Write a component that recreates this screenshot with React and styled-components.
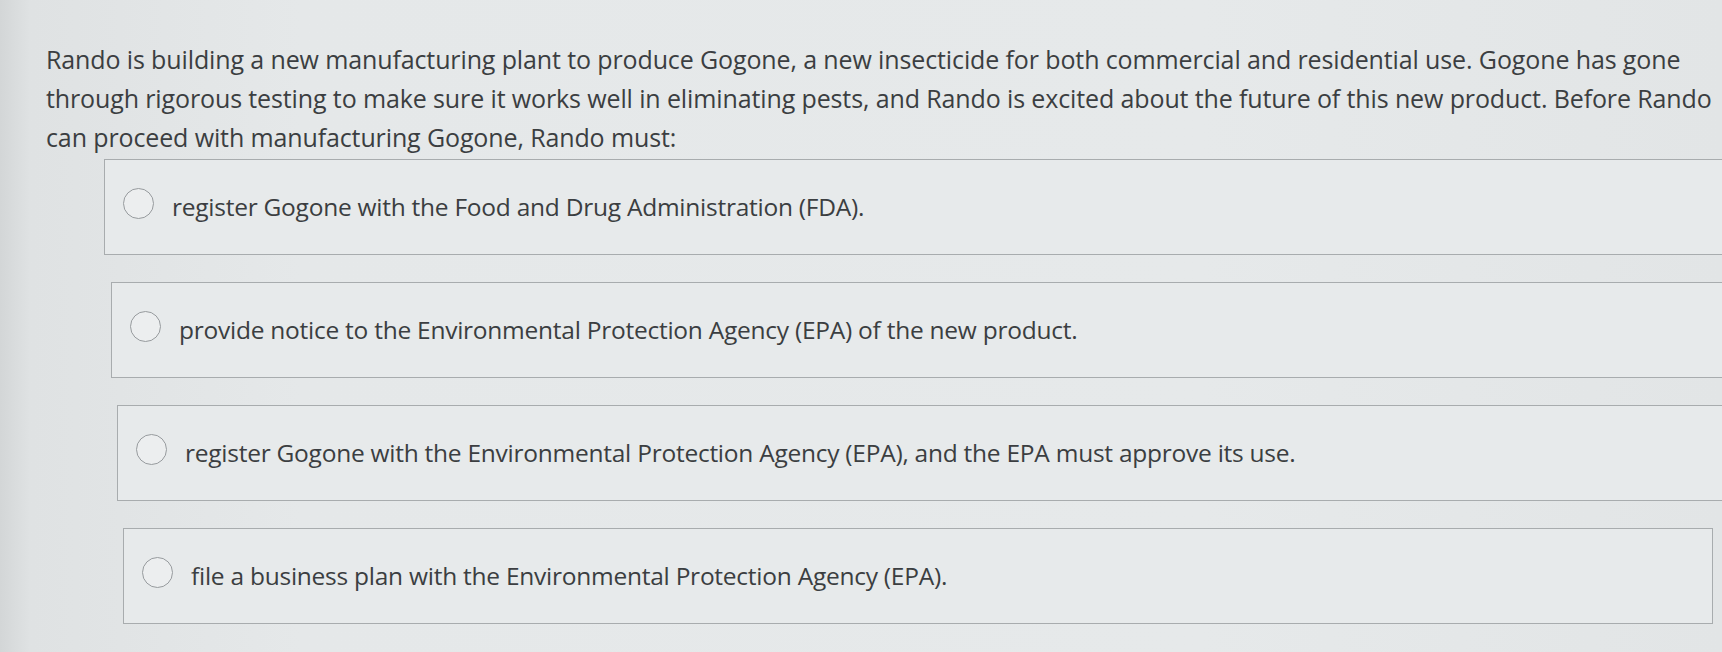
import React from 'react';
import styled, { createGlobalStyle } from 'styled-components';

const Global = createGlobalStyle`
    html, body {
        margin: 0;
        padding: 0;
        overflow: hidden;
    }
    body {
        background: #e3e6e7;
    }
`

const Page = styled.div`
    width: 1722px;
    height: 652px;
    overflow: hidden;
    box-sizing: border-box;
    padding: 40px 0 0 46px;
    background: linear-gradient(90deg, #d3d6d7 0px, #dfe2e3 30px, #e5e8e9 300px, #e6e9ea 1200px, #e2e5e6 1722px);
    font-family: "Open Sans", "Liberation Sans", sans-serif;
    color: #3b3e41;
`

const Question = styled.p`
    margin: 0 0 2px 0;
    font-size: 25px;
    line-height: 39px;
    letter-spacing: -0.12px;
    white-space: nowrap;
`

const Options = styled.div`
    display: flex;
    flex-direction: column;
    gap: 27px;
`

const Option = styled.label`
    display: flex;
    align-items: center;
    gap: 18px;
    height: 96px;
    box-sizing: border-box;
    margin-left: ${p => p.$left}px;
    margin-right: ${p => p.$right}px;
    padding: 0 0 0 18px;
    border: 1.5px solid #a8acae;
    background: #e7eaeb;
    cursor: pointer;
`

const Radio = styled.span`
    flex: none;
    width: 29px;
    height: 29px;
    border-radius: 50%;
    border: 1.5px solid #979b9e;
    background: #eceeef;
    margin-top: -8px;
`

const Text = styled.span`
    font-size: 24.5px;
    line-height: 30px;
    letter-spacing: -0.25px;
    white-space: nowrap;
`

const options = [
    { text: 'register Gogone with the Food and Drug Administration (FDA).', left: 58, right: -20 },
    { text: 'provide notice to the Environmental Protection Agency (EPA) of the new product.', left: 65, right: -14 },
    { text: 'register Gogone with the Environmental Protection Agency (EPA), and the EPA must approve its use.', left: 71, right: -2 },
    { text: 'file a business plan with the Environmental Protection Agency (EPA).', left: 77, right: 9 },
]

const App = () => {
    return (
        <Page>
            <Global />
            <Question>
                Rando is building a new manufacturing plant to produce Gogone, a new insecticide for both commercial and residential use. Gogone has gone<br />
                through rigorous testing to make sure it works well in eliminating pests, and Rando is excited about the future of this new product. Before Rando<br />
                can proceed with manufacturing Gogone, Rando must:
            </Question>
            <Options>
                {options.map(o => (
                    <Option key={o.text} $left={o.left} $right={o.right}>
                        <Radio />
                        <Text>{o.text}</Text>
                    </Option>
                ))}
            </Options>
        </Page>
    )
}

export default App
